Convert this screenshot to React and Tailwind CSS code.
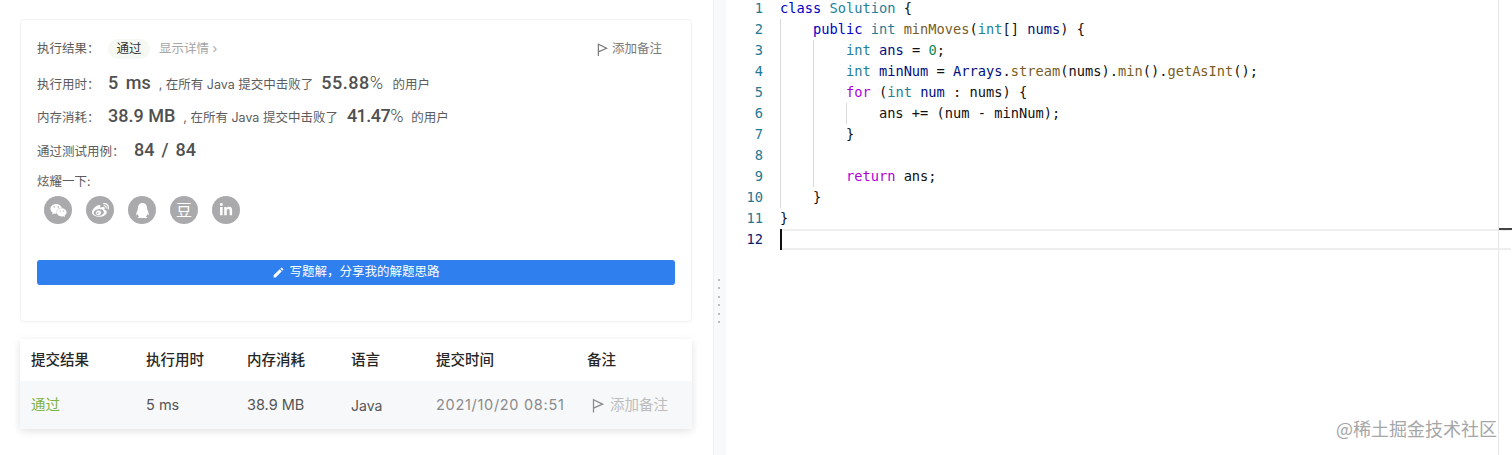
import React from 'react';
import { FaWeixin, FaWeibo, FaQq, FaLinkedinIn } from 'react-icons/fa';
import { MdEdit } from 'react-icons/md';

const cjk = "font-['Inter','Noto_Sans_CJK_SC',sans-serif]";

const K = 'text-[#0000c8]', T = 'text-[#267f99]', F = 'text-[#795e26]', V = 'text-[#001080]', N = 'text-[#098658]', C = 'text-[#af00db]', P = 'text-[#111]';

const codeLines = [
    [['class ', K], ['Solution', T], [' {', P]],
    [['    ', P], ['public ', K], ['int ', T], ['minMoves', F], ['(', P], ['int', T], ['[] ', P], ['nums', V], [') {', P]],
    [['        ', P], ['int ', T], ['ans', V], [' = ', P], ['0', N], [';', P]],
    [['        ', P], ['int ', T], ['minNum', V], [' = ', P], ['Arrays', V], ['.', P], ['stream', F], ['(nums).', P], ['min', F], ['().', P], ['getAsInt', F], ['();', P]],
    [['        ', P], ['for ', C], ['(', P], ['int ', T], ['num', V], [' : ', P], ['nums) {', P]],
    [['            ans += (num - minNum);', P]],
    [['        }', P]],
    [],
    [['        ', P], ['return ', C], ['ans;', P]],
    [['    }', P]],
    [['}', P]],
    [],
];

const Flag = ({ className }) => (
    <svg viewBox="0 0 12 14" fill="none" stroke="currentColor" strokeWidth="1.3" className={className}>
        <path d="M1.5 14V1.2L10.5 5.6L1.5 9.6" />
    </svg>
);

const ShareIcon = ({ children }) => (
    <div className="w-7 h-7 rounded-full bg-[#aaaaac] text-white flex items-center justify-center">{children}</div>
);

const StatRow = ({ label, value, valueClass, percent, percentClass, userGap }) => (
    <div className="flex items-baseline h-[20px] text-[12.5px] text-[#5c5c5c]">
        <span className="w-[71px]">{label}</span>
        <span className={`font-['Roboto'] font-medium text-[18px] text-[#505050] ${valueClass}`}>{value}</span>
        <span className="ml-[8px]">, 在所有 Java 提交中击败了</span>
        <span className={`font-['Roboto'] font-medium text-[18px] text-[#505050] ${percentClass}`}>
            {percent}<span className="font-light">%</span>
        </span>
        <span className={userGap}>的用户</span>
    </div>
);

const App = () => {
    return (
        <div className={`flex h-[455px] w-[1512px] overflow-hidden bg-white ${cjk}`}>
            {/* Left panel */}
            <div className="w-[713px] shrink-0 pt-[19px] pl-[20px] pr-[21px]">
                <div className="h-[303px] w-[672px] rounded border border-[#f2f2f2] shadow-[0_1px_2px_rgba(0,0,0,0.03)] pt-[19px] pl-[16px] pr-[16px]">
                    <div className="flex items-center h-[20px] text-[12.5px] text-[#5c5c5c]">
                        <span className="w-[71px]">执行结果：</span>
                        <span className="w-[42px] h-[20px] rounded-full bg-[#f6f9f2] text-[#333] flex items-center justify-center">通过</span>
                        <span className="ml-[9px] text-[#a6a6a6]">显示详情 ›</span>
                        <span className="ml-auto mr-[13px] flex items-center gap-[4px] text-[#7a7a7a]">
                            <Flag className="w-[11px] h-[13px]" />
                            添加备注
                        </span>
                    </div>
                    <div className="mt-[10px]">
                        <StatRow label="执行用时：" value="5 ms" valueClass="[word-spacing:3px]" percent="55.88" percentClass="ml-[8px] tracking-[0.5px]" userGap="ml-[9px]" />
                    </div>
                    <div className="mt-[13px]">
                        <StatRow label="内存消耗：" value="38.9 MB" valueClass="" percent="41.47" percentClass="ml-[9px] tracking-[-0.5px]" userGap="ml-[8px]" />
                    </div>
                    <div className="mt-[14px] flex items-baseline h-[20px] text-[12.5px] text-[#5c5c5c]">
                        <span className="w-[97px]">通过测试用例：</span>
                        <span className="font-['Roboto'] font-medium text-[18px] text-[#505050] [word-spacing:2.5px]">84 / 84</span>
                    </div>
                    <div className="mt-[17px] text-[12.5px] leading-[18px] text-[#5c5c5c]">炫耀一下:</div>
                    <div className="mt-[5px] ml-[7px] flex gap-[14px]">
                        <ShareIcon><FaWeixin size={17} /></ShareIcon>
                        <ShareIcon><FaWeibo size={17} /></ShareIcon>
                        <ShareIcon><FaQq size={15} /></ShareIcon>
                        <ShareIcon><span className="text-[16px] leading-none">豆</span></ShareIcon>
                        <ShareIcon><FaLinkedinIn size={14} /></ShareIcon>
                    </div>
                    <div className="mt-[36px] h-[25px] rounded-[3px] bg-[#2f7fef] text-white text-[12.5px] flex items-center justify-center gap-[4px]">
                        <MdEdit size={13} />
                        写题解，分享我的解题思路
                    </div>
                </div>

                <div className="mt-[17px] w-[672px] shadow-[0_2px_8px_rgba(0,0,0,0.12)] text-[14.5px]">
                    <div className="grid grid-cols-[115px_101px_104px_85px_151px_1fr] pl-[11px] h-[42px] items-center font-medium text-[#262626]">
                        <span>提交结果</span>
                        <span>执行用时</span>
                        <span>内存消耗</span>
                        <span>语言</span>
                        <span>提交时间</span>
                        <span>备注</span>
                    </div>
                    <div className="grid grid-cols-[115px_101px_104px_85px_151px_1fr] pl-[11px] h-[48px] items-center bg-[#f7f8fa] text-[#555]">
                        <span className="text-[#7cb342]">通过</span>
                        <span>5 ms</span>
                        <span>38.9 MB</span>
                        <span className="text-[14px]">Java</span>
                        <span className="text-[#8a8a8a] tracking-[0.7px]">2021/10/20 08:51</span>
                        <span className="flex items-center gap-[6px] pl-[5px] text-[#bdbdbd]">
                            <Flag className="w-[12px] h-[15px] text-[#8c8c8c]" />
                            添加备注
                        </span>
                    </div>
                </div>
            </div>

            {/* Resize handle */}
            <div className="w-[13px] shrink-0 bg-[#f8f9fb] border-l border-[#f0f0f0] pt-[279px] pl-[4px] flex flex-col gap-[6.4px]">
                {[0, 1, 2, 3, 4, 5].map((i) => (
                    <div key={i} className="w-[2px] h-[2px] rounded-full bg-[#a8a8a8]" />
                ))}
            </div>

            {/* Editor */}
            <div className="relative flex-1 font-['DejaVu_Sans_Mono',monospace] text-[13.7px] leading-[21px] whitespace-pre">
                <div className="-mt-[2px]">
                    {codeLines.map((tokens, i) => (
                        <div key={i} className="flex h-[21px]">
                            <div className={`w-[37px] shrink-0 text-right ${i === 11 ? 'text-[#0b216f]' : 'text-[#237893]'}`}>{i + 1}</div>
                            <div className={`ml-[17px] flex-1 ${i === 11 ? 'border-y-2 border-[#eeeeee] mr-px' : ''}`}>
                                {tokens.map(([text, color], j) => (
                                    <span key={j} className={color}>{text}</span>
                                ))}
                            </div>
                        </div>
                    ))}
                </div>

                {/* indent guides and caret */}
                <div className="absolute left-[54px] top-[19px] h-[189px] w-px bg-[#d9d9d9]" />
                <div className="absolute left-[87px] top-[40px] h-[147px] w-px bg-[#d9d9d9]" />
                <div className="absolute left-[120px] top-[103px] h-[21px] w-px bg-[#d9d9d9]" />
                <div className="absolute left-[54px] top-[229px] h-[21px] w-[2px] bg-[#111]" />

                {/* overview ruler */}
                <div className="absolute right-0 top-0 h-full w-[14px] border-l border-[#e6e6e6]">
                    <div className="h-[2px] mt-[228px] bg-[#444]" />
                </div>

                <div className="absolute left-[610px] top-[417px] text-[18px] leading-[22px] text-[#a6a6a6] font-['Noto_Sans_CJK_SC',sans-serif]">@稀土掘金技术社区</div>
            </div>
        </div>
    );
};

export default App;
